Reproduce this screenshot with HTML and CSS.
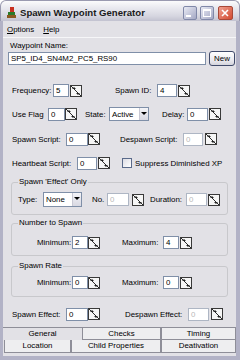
FILE: index.html
```html
<!DOCTYPE html>
<html>
<head>
<meta charset="utf-8">
<link rel="stylesheet" href="styles.css">
</head>
<body>
<div class="window">
  <div class="titlebar">
    <svg class="appicon" width="9" height="11" viewBox="0 0 9 11"><rect x="3" y="0" width="4" height="5" fill="#c83020"/><rect x="1" y="5" width="7" height="3" fill="#2a7a2a"/><rect x="0" y="8" width="9" height="3" fill="#8a5a20"/></svg>
    <span class="title">Spawn Waypoint Generator</span>
    <div class="tbtns">
      <span class="tb"><svg width="14" height="14" viewBox="0 0 14 14"><rect x="3" y="9" width="5" height="2" fill="#fff"/></svg></span>
      <span class="tb"><svg width="14" height="14" viewBox="0 0 14 14"><rect x="3.5" y="3.5" width="7" height="7" fill="none" stroke="#fff"/><rect x="3" y="3" width="8" height="2" fill="#fff"/></svg></span>
      <span class="tb close"><svg width="14" height="14" viewBox="0 0 14 14"><path d="M4 4 L10 10 M10 4 L4 10" stroke="#fff" stroke-width="1.6"/></svg></span>
    </div>
  </div>
  <div class="frame">
    <div class="menubar"><span class="menu"><u>O</u>ptions</span><span class="menu"><u>H</u>elp</span></div>
    <div class="panel">
      <div class="name-lbl">Waypoint Name:</div>
      <div class="name-row">
        <div class="edit name-edit">SP5_ID4_SN4M2_PC5_RS90</div>
        <div class="btn">New</div>
      </div>

      <div class="row r-freq">
        <span class="lbl w-freq">Frequency:</span>
        <span class="edit w16">5</span>
        <span class="spin ml1"></span>
        <span class="lbl w-sid">Spawn ID:</span>
        <span class="edit w20">4</span>
        <span class="spin ml1"></span>
      </div>

      <div class="row r-flag">
        <span class="lbl w-flag">Use Flag</span>
        <span class="edit w17">0</span>
        <span class="spin"></span>
        <span class="lbl w-state">State:</span>
        <span class="select w40"><span class="sel-text">Active</span><span class="sel-btn"></span></span>
        <span class="lbl w-delay">Delay:</span>
        <span class="edit w21">0</span>
        <span class="spin ml1"></span>
      </div>

      <div class="row r-script">
        <span class="lbl w-sscript">Spawn Script:</span>
        <span class="edit w22">0</span>
        <span class="spin"></span>
        <span class="lbl w-dscript">Despawn Script:</span>
        <span class="edit w20 disabled">0</span>
        <span class="spin ml2"></span>
      </div>

      <div class="row r-heart">
        <span class="lbl w-heart">Heartbeat Script:</span>
        <span class="edit w20">0</span>
        <span class="spin ml1"></span>
        <span class="check"></span>
        <span class="lbl chk-lbl">Suppress Diminished XP</span>
      </div>

      <div class="group g1">
        <span class="gtitle">Spawn 'Effect' Only</span>
        <div class="row grow">
          <span class="lbl w-type">Type:</span>
          <span class="select w39 tall"><span class="sel-text">None</span><span class="sel-btn"></span></span>
          <span class="lbl w-no">No.</span>
          <span class="edit w22 disabled">0</span>
          <span class="spin ml3"></span>
          <span class="lbl w-dur">Duration:</span>
          <span class="edit w21 disabled">0</span>
          <span class="spin ml1"></span>
        </div>
      </div>

      <div class="group g2">
        <span class="gtitle">Number to Spawn</span>
        <div class="row grow">
          <span class="lbl w-min">Minimum:</span>
          <span class="edit w16">2</span>
          <span class="spin"></span>
          <span class="lbl w-max">Maximum:</span>
          <span class="edit w16">4</span>
          <span class="spin ml1"></span>
        </div>
      </div>

      <div class="group g3">
        <span class="gtitle">Spawn Rate</span>
        <div class="row grow">
          <span class="lbl w-min">Minimum:</span>
          <span class="edit w16">0</span>
          <span class="spin"></span>
          <span class="lbl w-max">Maximum:</span>
          <span class="edit w16">0</span>
          <span class="spin ml1"></span>
        </div>
      </div>

      <div class="row r-effect">
        <span class="lbl w-seff">Spawn Effect:</span>
        <span class="edit w22">0</span>
        <span class="spin"></span>
        <span class="lbl w-deff">Despawn Effect:</span>
        <span class="edit w21 disabled">0</span>
        <span class="spin ml2"></span>
      </div>

      <div class="tabs">
        <div class="tabrow top">
          <span class="tab active t-gen">General</span>
          <span class="tab t-chk">Checks</span>
          <span class="tab t-tim">Timing</span>
        </div>
        <div class="tabrow">
          <span class="tab t-loc">Location</span>
          <span class="tab t-child">Child Properties</span>
          <span class="tab t-deact">Deativation</span>
        </div>
      </div>
    </div>
  </div>
</div>
</body>
</html>
```

FILE: styles.css
```css
* { box-sizing: border-box; margin: 0; padding: 0; }
body {
  width: 240px; height: 360px; overflow: hidden;
  font-family: "Liberation Sans", Arial, sans-serif;
  font-size: 7.9px; color: #000; background: #fff;
}
.window { width: 240px; height: 360px; display: flex; flex-direction: column; }
.titlebar {
  height: 21px; flex: none; display: flex; align-items: center; padding-left: 6px;
  background: linear-gradient(#fbfbfc 0%, #e9e9ef 35%, #d6d6e0 75%, #c2c2d0 100%);
  border-radius: 6px 6px 0 0; border: 1px solid #9a9ab0; border-bottom: none;
}
.appicon { flex: none; margin-top: 2px; }
.title { margin-left: 4px; font-weight: bold; font-size: 9.6px; color: #1a1a1a; flex: 1; padding-top: 2px; }
.tbtns { display: flex; gap: 2px; margin-right: 6px; margin-top: 4px; }
.tb {
  width: 14px; height: 14px; border-radius: 2px; display: block;
  background: linear-gradient(135deg, #e8eaf4, #a4a8c4); border: 1px solid #8088a8;
}
.tb svg { display: block; margin: -1px; }
.tb + .tb { margin-left: 1px; }
.tb.close { width: 15px; background: linear-gradient(135deg, #f0a090, #d24a30); border-color: #a84838; margin-left: 2px; }
.frame {
  flex: 1; display: flex; flex-direction: column;
  background: #e2e1e6;
  border-left: 3px solid #b2b2c6; border-right: 4px solid #b2b2c6; border-bottom: 4px solid #b2b2c6;
}
.menubar {
  height: 17px; flex: none; display: flex; align-items: center; padding-left: 4px;
  border-bottom: 1px solid #f6f6f8; background: #e2e1e6;
}
.menu { margin-right: 9px; }
.panel { flex: 1; display: flex; flex-direction: column; }
.name-lbl { margin: 3px 0 0 7px; height: 10px; line-height: 10px; }
.name-row { display: flex; height: 14px; margin-left: 5px; align-items: flex-start; }
.edit {
  display: block; height: 13px; line-height: 11px; padding-left: 2px;
  background: #fff; border: 1px solid #7f8fa8; flex: none;
  white-space: nowrap; overflow: hidden;
}
.edit.disabled { color: #b8b8b8; border-color: #aeb6c4; }
.name-edit { width: 198px; margin-top: 1px; }
.btn {
  width: 26px; height: 15px; margin-left: 3px; line-height: 13px; text-align: center;
  border: 1px solid #404a6a; border-radius: 3px;
  background: linear-gradient(#ffffff, #ecebf0 60%, #d4d4dc);
}
.row { display: flex; align-items: center; height: 14px; flex: none; }
.lbl { flex: none; white-space: nowrap; }
.spin {
  flex: none; display: block; width: 12px; height: 12px; position: relative;
  border: 1px solid #3a3a3a;
  background:
    linear-gradient(to top right, transparent calc(50% - 0.6px), #2a2a2a calc(50% - 0.6px), #2a2a2a calc(50% + 0.6px), transparent calc(50% + 0.6px)),
    #f6f6f6;
}
.spin::before {
  content: ""; position: absolute; left: 1px; top: 1px;
  border-left: 2px solid transparent; border-right: 2px solid transparent; border-bottom: 2px solid #222;
}
.spin::after {
  content: ""; position: absolute; right: 1px; bottom: 1px;
  border-left: 2px solid transparent; border-right: 2px solid transparent; border-top: 2px solid #222;
}
.ml1 { margin-left: 1px; }
.ml2 { margin-left: 2px; }
.ml3 { margin-left: 3px; }
.w16 { width: 16px; } .w17 { width: 17px; } .w20 { width: 20px; }
.w21 { width: 21px; } .w22 { width: 22px; }
.select {
  flex: none; display: flex; height: 14px; background: #fff; border: 1px solid #7f8fa8;
  align-items: center;
}
.select.tall { height: 15px; }
.w40 { width: 40px; } .w39 { width: 39px; }
.sel-text { flex: 1; padding-left: 2px; line-height: 11px; }
.sel-btn {
  width: 9px; height: 100%; position: relative;
  background: linear-gradient(#f4f4f8, #d8d8e2); border-left: 1px solid #c8c8d4;
}
.sel-btn::after {
  content: ""; position: absolute; left: 1px; top: 4px;
  border-left: 3px solid transparent; border-right: 3px solid transparent; border-top: 3px solid #000;
}
.check {
  flex: none; display: block; width: 10px; height: 10px; margin-left: 12px;
  background: linear-gradient(135deg, #dcdce4, #fff); border: 1px solid #5a6a8a;
}
.chk-lbl { margin-left: 3px; }

.r-freq { margin-top: 19px; height: 13px; }
.w-freq { margin-left: 9px; width: 41px; }
.w-sid { margin-left: 33px; width: 42px; }

.r-flag { margin-top: 10px; }
.w-flag { margin-left: 9px; width: 36px; }
.w-state { margin-left: 8px; width: 24px; }
.w-delay { margin-left: 13px; width: 25px; }

.r-script { margin-top: 11px; }
.w-sscript { margin-left: 9px; width: 54px; }
.w-dscript { margin-left: 20px; width: 63px; }

.r-heart { margin-top: 10px; }
.w-heart { margin-left: 9px; width: 65px; }

.group { position: relative; border: 1px solid #c8c8cc; border-radius: 3px; margin: 0 8px; flex: none; }
.gtitle {
  position: absolute; top: -6px; left: 6px; padding: 0 1px;
  background: #e2e1e6; line-height: 10px;
}
.g1 { margin-top: 12px; padding: 9px 0 7px; }
.g2 { margin-top: 8px; padding: 12px 0 6px; }
.g3 { margin-top: 10px; padding: 9px 0 7px; }
.grow { height: 15px; }
.g2 .grow, .g3 .grow { height: 13px; }
.w-type { margin-left: 6px; width: 25px; }
.w-no { margin-left: 10px; width: 15px; }
.w-dur { margin-left: 6px; width: 36px; }
.w-min { margin-left: 25px; width: 35px; }
.w-max { margin-left: 22px; width: 41px; }

.r-effect { margin-top: 10px; }
.w-seff { margin-left: 9px; width: 54px; }
.w-deff { margin-left: 25px; width: 63px; }

.tabs { margin-top: 6px; display: flex; flex-direction: column; }
.tabrow { display: flex; height: 13px; }
.tab {
  display: block; height: 13px; line-height: 12px; text-align: center; flex: none;
  background: #eeeef0; border: 1px solid #8e8e98; border-top: none;
}
.tabrow.top .tab { border-top: 1px solid #8e8e98; }
.tab.active { background: #e2e1e6; border: none; }
.t-gen { width: 79px; }
.t-chk { width: 79px; }
.t-tim { width: 75px; }
.t-loc { width: 67px; margin-left: 1px; }
.t-child { width: 90px; }
.t-deact { width: 75px; }
```
